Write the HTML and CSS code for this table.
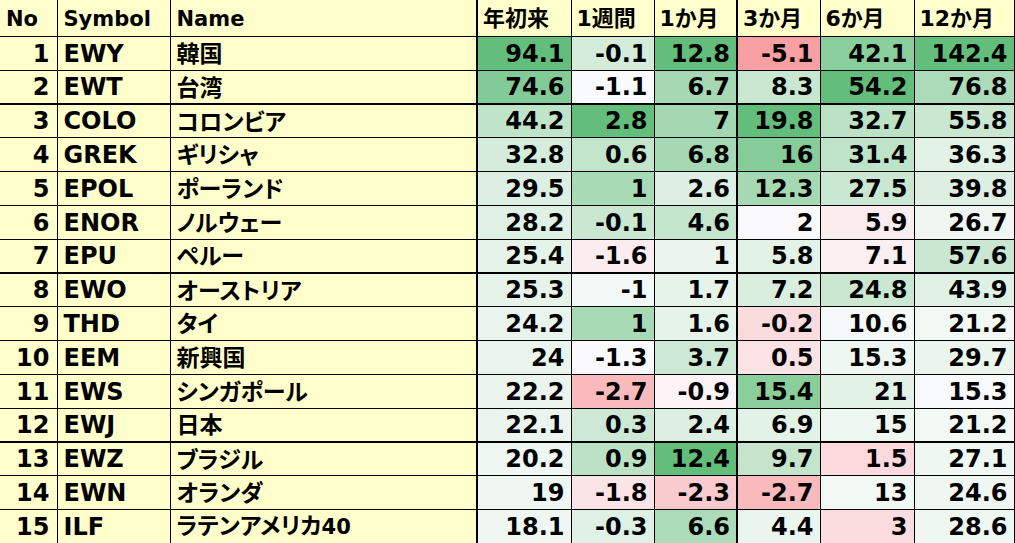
FILE: index.html
```html
<!DOCTYPE html>
<html lang="ja">
<head>
<meta charset="utf-8">
<title>ETF</title>
<link rel="stylesheet" href="styles.css">
</head>
<body>
<table class="sheet">
<colgroup>
<col class="c-no"><col class="c-sym"><col class="c-name"><col class="c-v1"><col class="c-v"><col class="c-v"><col class="c-v"><col class="c-v1"><col class="c-v2">
</colgroup>
<thead>
<tr class="hdr">
<th>No</th><th>Symbol</th><th>Name</th><th class="sep jp">年初来</th><th class="jp">1週間</th><th class="jp">1か月</th><th class="sep jp">3か月</th><th class="jp">6か月</th><th class="jp">12か月</th>
</tr>
</thead>
<tbody>
<tr><td class="no">1</td><td class="sym">EWY</td><td class="nm">韓国</td><td class="num sep" style="background:#63BE7B">94.1</td><td class="num" style="background:#D4EDDB">-0.1</td><td class="num" style="background:#63BE7B">12.8</td><td class="num sep" style="background:#F89FA2">-5.1</td><td class="num" style="background:#8ACE9C">42.1</td><td class="num" style="background:#63BE7B">142.4</td></tr>
<tr><td class="no">2</td><td class="sym">EWT</td><td class="nm">台湾</td><td class="num sep" style="background:#82CB96">74.6</td><td class="num" style="background:#F8FAFC">-1.1</td><td class="num" style="background:#A6D9B3">6.7</td><td class="num sep" style="background:#C8E7D0">8.3</td><td class="num" style="background:#63BE7B">54.2</td><td class="num" style="background:#ABDBB8">76.8</td></tr>
<tr class="grp"><td class="no">3</td><td class="sym">COLO</td><td class="nm">コロンビア</td><td class="num sep" style="background:#C0E4CA">44.2</td><td class="num" style="background:#63BE7B">2.8</td><td class="num" style="background:#A4D8B2">7</td><td class="num sep" style="background:#63BE7B">19.8</td><td class="num" style="background:#BCE2C6">32.7</td><td class="num" style="background:#C9E7D1">55.8</td></tr>
<tr><td class="no">4</td><td class="sym">GREK</td><td class="nm">ギリシャ</td><td class="num sep" style="background:#D5ECDC">32.8</td><td class="num" style="background:#C2E5CB">0.6</td><td class="num" style="background:#A5D9B3">6.8</td><td class="num sep" style="background:#85CC98">16</td><td class="num" style="background:#BFE3C8">31.4</td><td class="num" style="background:#E2F2E7">36.3</td></tr>
<tr><td class="no">5</td><td class="sym">EPOL</td><td class="nm">ポーランド</td><td class="num sep" style="background:#DCEFE2">29.5</td><td class="num" style="background:#A8DAB5">1</td><td class="num" style="background:#DCEFE2">2.6</td><td class="num sep" style="background:#A6D9B3">12.3</td><td class="num" style="background:#C9E7D1">27.5</td><td class="num" style="background:#DCEFE2">39.8</td></tr>
<tr><td class="no">6</td><td class="sym">ENOR</td><td class="nm">ノルウェー</td><td class="num sep" style="background:#DFF0E4">28.2</td><td class="num" style="background:#C9E7D1">-0.1</td><td class="num" style="background:#C2E5CB">4.6</td><td class="num sep" style="background:#F9F9FC">2</td><td class="num" style="background:#FBEDEF">5.9</td><td class="num" style="background:#F0F7F2">26.7</td></tr>
<tr><td class="no">7</td><td class="sym">EPU</td><td class="nm">ペルー</td><td class="num sep" style="background:#E5F3E9">25.4</td><td class="num" style="background:#FBEDEF">-1.6</td><td class="num" style="background:#EBF5EE">1</td><td class="num sep" style="background:#E2F2E7">5.8</td><td class="num" style="background:#FBEFF1">7.1</td><td class="num" style="background:#C9E7D1">57.6</td></tr>
<tr class="grp"><td class="no">8</td><td class="sym">EWO</td><td class="nm">オーストリア</td><td class="num sep" style="background:#E5F3E9">25.3</td><td class="num" style="background:#F2F8F5">-1</td><td class="num" style="background:#E5F3E9">1.7</td><td class="num sep" style="background:#D9EEDF">7.2</td><td class="num" style="background:#C9E7D1">24.8</td><td class="num" style="background:#DFF0E4">43.9</td></tr>
<tr><td class="no">9</td><td class="sym">THD</td><td class="nm">タイ</td><td class="num sep" style="background:#E8F4EC">24.2</td><td class="num" style="background:#A8DAB5">1</td><td class="num" style="background:#E5F3E9">1.6</td><td class="num sep" style="background:#FADCDF">-0.2</td><td class="num" style="background:#F6F9FA">10.6</td><td class="num" style="background:#F2F8F4">21.2</td></tr>
<tr><td class="no">10</td><td class="sym">EEM</td><td class="nm">新興国</td><td class="num sep" style="background:#E8F4EC">24</td><td class="num" style="background:#FAFAFC">-1.3</td><td class="num" style="background:#CDE9D5">3.7</td><td class="num sep" style="background:#FBE3E5">0.5</td><td class="num" style="background:#EEF7F1">15.3</td><td class="num" style="background:#EBF5EE">29.7</td></tr>
<tr><td class="no">11</td><td class="sym">EWS</td><td class="nm">シンガポール</td><td class="num sep" style="background:#EBF5EE">22.2</td><td class="num" style="background:#F8BABD">-2.7</td><td class="num" style="background:#FBF3F5">-0.9</td><td class="num sep" style="background:#8ACE9C">15.4</td><td class="num" style="background:#E2F2E7">21</td><td class="num" style="background:#F9FAFC">15.3</td></tr>
<tr><td class="no">12</td><td class="sym">EWJ</td><td class="nm">日本</td><td class="num sep" style="background:#EBF5EE">22.1</td><td class="num" style="background:#CDE9D5">0.3</td><td class="num" style="background:#DCEFE2">2.4</td><td class="num sep" style="background:#E2F2E7">6.9</td><td class="num" style="background:#EEF7F1">15</td><td class="num" style="background:#F2F8F4">21.2</td></tr>
<tr class="grp"><td class="no">13</td><td class="sym">EWZ</td><td class="nm">ブラジル</td><td class="num sep" style="background:#EEF7F1">20.2</td><td class="num" style="background:#BCE2C6">0.9</td><td class="num" style="background:#63BE7B">12.4</td><td class="num sep" style="background:#C4E5CC">9.7</td><td class="num" style="background:#FBD9DC">1.5</td><td class="num" style="background:#EEF7F1">27.1</td></tr>
<tr><td class="no">14</td><td class="sym">EWN</td><td class="nm">オランダ</td><td class="num sep" style="background:#F0F7F2">19</td><td class="num" style="background:#FBE4E6">-1.8</td><td class="num" style="background:#F9CBCE">-2.3</td><td class="num sep" style="background:#F8BABD">-2.7</td><td class="num" style="background:#F2F8F4">13</td><td class="num" style="background:#F0F7F2">24.6</td></tr>
<tr><td class="no">15</td><td class="sym">ILF</td><td class="nm">ラテンアメリカ<span class="lat">40</span></td><td class="num sep" style="background:#F0F7F3">18.1</td><td class="num" style="background:#DFF0E4">-0.3</td><td class="num" style="background:#ABDBB8">6.6</td><td class="num sep" style="background:#EAF5EE">4.4</td><td class="num" style="background:#FBDDE0">3</td><td class="num" style="background:#EEF7F1">28.6</td></tr>
</tbody>
</table>
</body>
</html>
```

FILE: styles.css
```css
html, body {
  margin: 0;
  padding: 0;
  background: #ffffff;
}

.sheet {
  border-collapse: collapse;
  table-layout: fixed;
  width: 1014px;
  font-family: "DejaVu Sans", "Noto Sans CJK JP", sans-serif;
  font-weight: bold;
  color: #000;
}

.c-no { width: 57px; }
.c-sym { width: 113px; }
.c-name { width: 307px; }
.c-v1 { width: 94px; }
.c-v { width: 83px; }
.c-v2 { width: 100px; }

.sheet th,
.sheet td {
  border: 1px solid #000;
  padding: 0 6px;
  white-space: nowrap;
  line-height: 1.15;
}

.sheet th:first-child,
.sheet td:first-child {
  border-left: none;
}

.hdr th {
  height: 33px;
  border-top: none;
  background: #FFFFCC;
  font-size: 21px;
  text-align: left;
  padding: 3px 5px 0 6px;
}

.hdr th.jp {
  font-size: 22px;
  font-weight: bold;
  padding-left: 5px;
  padding-top: 2px;
  font-feature-settings: "palt";
}

.sheet tbody tr {
  height: 33.8px;
}

.sheet td {
  font-size: 24px;
  padding-top: 2px;
  padding-bottom: 0;
}

.no {
  background: #FFFFCC;
  text-align: right;
  padding-right: 7px !important;
}

.sym {
  background: #FFFFCC;
  text-align: left;
}

.sheet td.nm {
  background: #FFFFCC;
  text-align: left;
  font-size: 23px;
  font-weight: bold;
  line-height: 1.3;
  font-family: "Noto Sans CJK JP", "DejaVu Sans", sans-serif;
  font-feature-settings: "palt";
  padding-top: 0;
  padding-bottom: 1px;
}

.lat {
  font-family: "DejaVu Sans", sans-serif;
  font-weight: bold;
  font-size: 21px;
}

.num {
  text-align: right;
}

.sep {
  border-left: 2px solid #000 !important;
}

.grp td {
  border-top: 2px solid #000;
}
```
